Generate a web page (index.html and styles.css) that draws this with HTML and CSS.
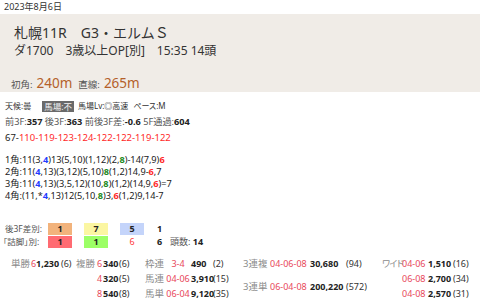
FILE: index.html
```html
<!DOCTYPE html>
<html lang="ja">
<head>
<meta charset="utf-8">
<title>札幌11R G3・エルムＳ</title>
<link rel="stylesheet" href="styles.css">
</head>
<body>
<div class="date">2023年8月6日</div>
<section class="race">
  <div class="race-name">札幌11R　G3・エルムＳ</div>
  <div class="race-cond">ダ1700　3歳以上OP[別]　15:35 14頭</div>
  <div class="course"><span class="lbl">初角:</span><span class="dist">240m</span><span class="lbl">直線:</span><span class="dist">265m</span></div>
</section>
<section class="info">
  <div class="row cond"><span>天候:曇</span><span class="baba">馬場:不</span><span class="lv">馬場Lv:◎高速</span><span class="pc">ペース:M</span></div>
  <div class="row pace"><span class="k">前3F:</span><b>357</b> <span class="k">後3F:</span><b>363</b> <span class="k">前後3F差:</span><b>-0.6</b> <span class="k">5F通過:</span><b>604</b></div>
  <div class="row laps">67-<span class="r">110-119-123-124-122-122-119-122</span></div>
</section>
<section class="corners">
  <div>1角:11(3,<b class="b">4</b>)13(5,10)(1,12)(2,<b class="g">8</b>)-14(7,9)<b class="r">6</b></div>
  <div>2角:11(<b class="b">4</b>,13)(3,12)(5,10)<b class="g">8</b>(1,2)14,9-<b class="r">6</b>,7</div>
  <div>3角:11(<b class="b">4</b>,13)(3,5,12)(10,<b class="g">8</b>)(1,2)(14,9,<b class="r">6</b>)=7</div>
  <div>4角:(11,*<b class="b">4</b>,13)12(5,10,<b class="g">8</b>)3,<b class="r">6</b>(1,2)9,14-7</div>
</section>
<section class="ranks">
  <div class="lbl">後3F差別:</div>
  <div class="box orange">1</div>
  <div class="box yellow">7</div>
  <div class="box blue">5</div>
  <div class="v">1</div>
  <div></div>
  <div class="lbl tight">「詰脚」別:</div>
  <div class="box pink">1</div>
  <div class="box green">1</div>
  <div class="box plain">6</div>
  <div class="v">6</div>
  <div class="heads"><span class="k">頭数:</span> <b>14</b></div>
</section>
<section class="pay">
  <div class="l">単勝</div><div class="c">6</div><div class="p">1,230</div><div class="n">(6)</div>
  <div class="l">複勝</div><div class="c num">6</div><div class="p">340</div><div class="n">(6)</div>
  <div class="l">枠連</div><div class="c mid">3-4</div><div class="p">490</div><div class="n">(2)</div>
  <div class="l">3連複</div><div class="c">04-06-08</div><div class="p">30,680</div><div class="n">(94)</div>
  <div class="l tight">ワイド</div><div class="c">04-06</div><div class="p">1,510</div><div class="n">(16)</div>

  <div></div><div></div><div></div><div></div><div></div>
  <div class="c num">4</div><div class="p">320</div><div class="n">(5)</div>
  <div class="l">馬連</div><div class="c mid">04-06</div><div class="p">3,910</div><div class="n">(15)</div>
  <div class="l s2">3連単</div><div class="c s2">06-04-08</div><div class="p s2">200,220</div><div class="n s2">(572)</div>
  <div></div><div class="c">06-08</div><div class="p">2,700</div><div class="n">(34)</div>

  <div></div><div></div><div></div><div></div><div></div>
  <div class="c num">8</div><div class="p">540</div><div class="n">(8)</div>
  <div class="l">馬単</div><div class="c mid">06-04</div><div class="p">9,120</div><div class="n">(35)</div>
  <div></div><div class="c">04-08</div><div class="p">2,570</div><div class="n">(31)</div>
</section>
</body>
</html>
```
FILE: styles.css
```css
* {
  box-sizing: border-box;
  margin: 0;
  padding: 0;
}

body {
  margin: 0;
  width: 480px;
  height: 305px;
  overflow: hidden;
  background: #fff;
  color: #222;
  font-family: "Noto Sans", "Noto Sans CJK JP", sans-serif;
}

.tight {
  font-feature-settings: "palt";
}

.date {
  height: 14px;
  line-height: 14px;
  font-size: 9px;
  padding-left: 4px;
  color: #333;
}

.race {
  height: 78px;
  background: #f0ece7;
  padding: 9px 0 0 14px;
  color: #333;
}

.race-name {
  font-size: 14px;
  line-height: 20px;
}

.race-cond {
  font-size: 12px;
  line-height: 15px;
}

.course {
  margin-top: 16px;
  margin-left: -3px;
  height: 18px;
  line-height: 18px;
  display: flex;
  align-items: baseline;
}

.course .lbl {
  font-size: 9.5px;
  color: #555;
}

.course .dist {
  font-size: 13.5px;
  color: #b4602a;
  margin: 0 6px 0 4px;
}

.info {
  padding: 6px 0 0 5px;
}

.row {
  line-height: 16px;
  height: 16px;
  white-space: nowrap;
}

.cond {
  font-size: 8px;
  display: flex;
  align-items: center;
  color: #333;
}

.baba {
  margin-left: 11px;
  padding: 0 2px;
  line-height: 11px;
  font-size: 8.5px;
  background: #6a6a6a;
  color: #f2f2f2;
}

.lv {
  margin-left: 4px;
}

.pc {
  margin-left: 5px;
  font-feature-settings: "palt";
}

.pace {
  font-size: 9.2px;
}

.pace .k {
  color: #555;
}

.pace b {
  color: #222;
}

.laps {
  font-size: 9.5px;
}

.r {
  color: #ff2a2a;
}

.b {
  color: #1f3cff;
}

.g {
  color: #1a8a1a;
}

.corners {
  margin-top: 8px;
  padding-left: 5px;
  font-size: 9.2px;
  line-height: 12px;
  white-space: nowrap;
}

.corners b {
  font-weight: 700;
}

.ranks {
  margin-top: 21px;
  display: grid;
  grid-template-columns: 48px 36px 36px 36px 14px auto;
  grid-auto-rows: 12px;
  row-gap: 1px;
  font-size: 9px;
  line-height: 12px;
  white-space: nowrap;
}

.ranks .lbl {
  padding-left: 5px;
  font-size: 8.5px;
  color: #555;
}

.ranks .lbl.tight {
  padding-left: 3px;
}

.box {
  width: 24px;
  text-align: center;
  font-weight: 700;
  color: #222;
}

.orange { background: #f2b37c; }
.yellow { background: #fbf6a2; }
.blue { background: #c4d4fa; }
.pink { background: #ff6b72; }
.green { background: #9cff66; }

.plain {
  color: #ff3a3a;
  font-weight: 400;
}

.ranks .v {
  font-weight: 700;
  padding-left: 1px;
}

.heads .k {
  color: #555;
}

.pay {
  margin-top: 8px;
  padding-left: 11px;
  display: grid;
  grid-template-columns: 20px 5px 25px 15px 20px 7px 16px 26px 20px 26px 22px 30px 27px 40px 36px 36px 20px 26px 25px 1fr;
  grid-auto-rows: 15px;
  font-size: 9px;
  line-height: 15px;
  white-space: nowrap;
}

.pay .l {
  color: #8a8a8a;
  font-size: 9.5px;
}

.pay .l.tight {
  letter-spacing: -0.6px;
  font-size: 9px;
}

.pay .c {
  color: #e8485a;
}

.pay .mid {
  text-align: center;
}

.pay .num {
  text-align: center;
}

.pay .p {
  font-weight: 700;
  color: #222;
}

.pay .n {
  color: #333;
}

.pay .s2 {
  grid-row: span 2;
  align-self: center;
}
```
